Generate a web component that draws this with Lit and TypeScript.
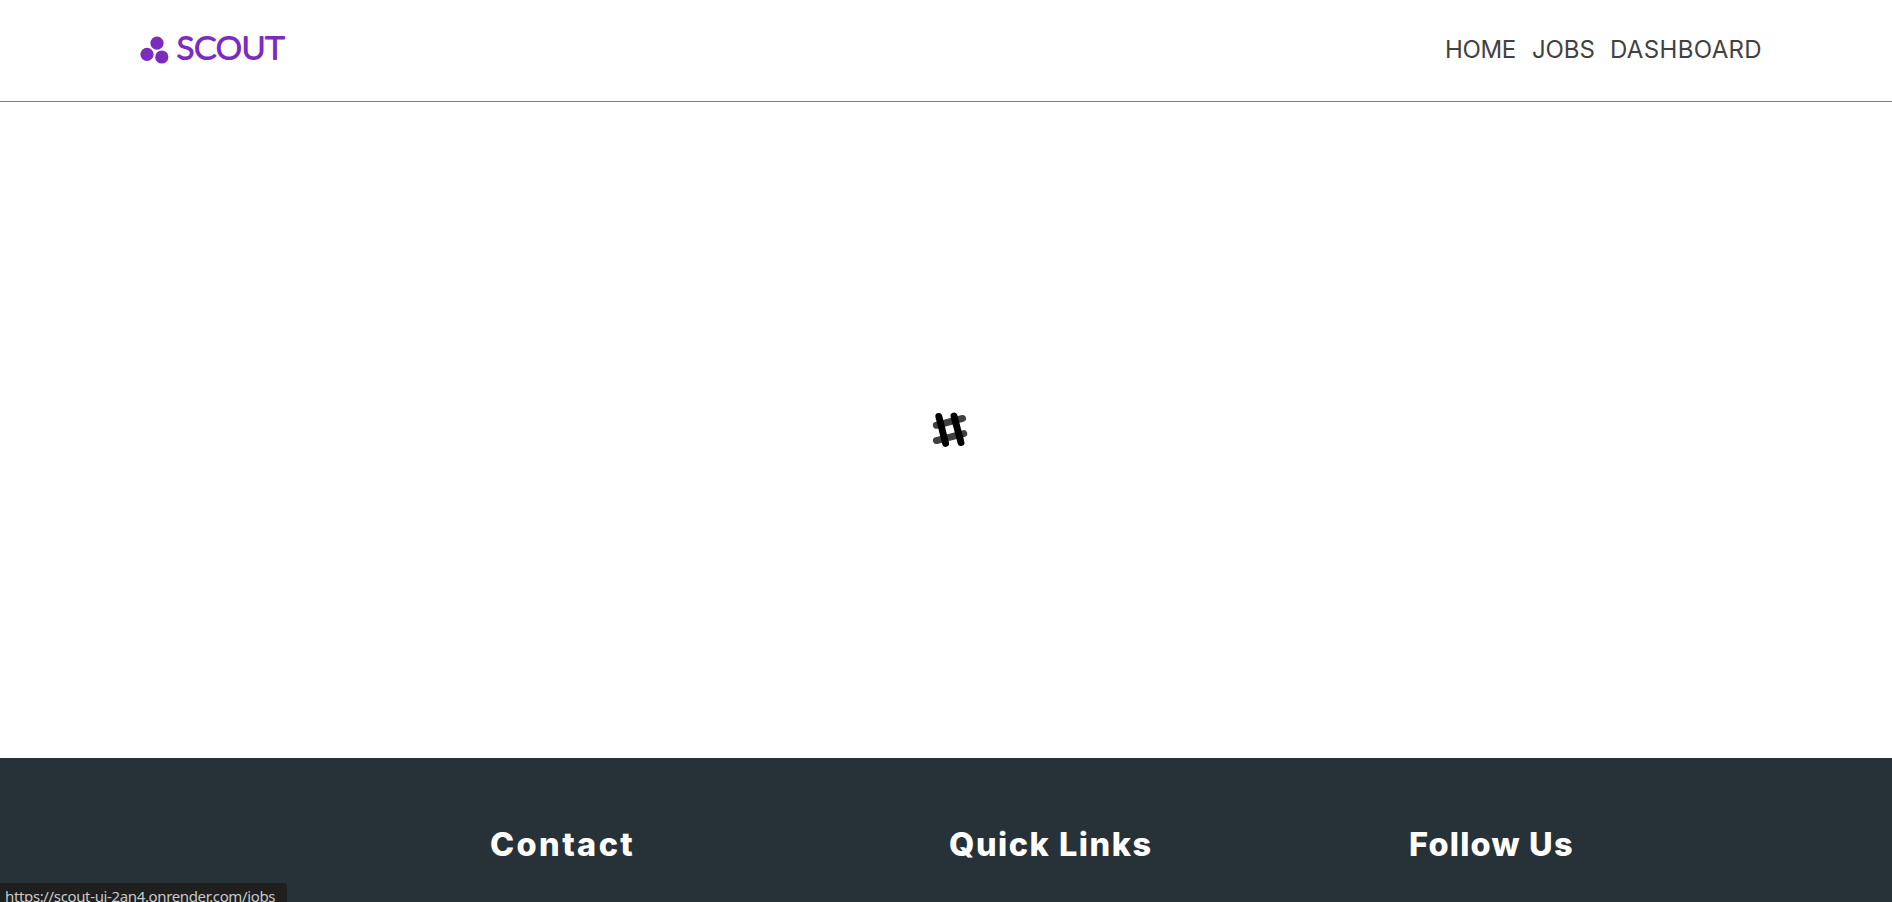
import { LitElement, html, css } from "lit";
import { customElement } from "lit/decorators.js";

@customElement("app-root")
export class AppRoot extends LitElement {
  static styles = css`
    :host { display: flex; flex-direction: column; height: 902px; overflow: hidden; position: relative;
      background: #fff; font-family: Inter, "Open Sans", sans-serif; }
    header { box-sizing: border-box; height: 102px; border-bottom: 1px solid #808080; display: flex;
      justify-content: space-between; align-items: flex-start; padding: 25px 130px 0 130px; }
    .logo { display: block; }
    .logo text { font-family: Lato, sans-serif; font-size: 32px; font-weight: 300; }
    nav { display: flex; padding-top: 10px; color: #424242; font-size: 24px; line-height: 29px; font-weight: 380; }
    .home { width: 87px; letter-spacing: -0.4px; }
    .jobs { width: 78px; letter-spacing: -0.1px; }
    .dash { width: 152px; letter-spacing: 0.35px; }
    main { height: 656px; display: flex; align-items: center; justify-content: center; padding-left: 8px; }
    footer { flex: 1; background: #263238; display: grid; grid-template-columns: repeat(4, 459px);
      padding: 67px 0 0 31px; }
    h3 { margin: 0; color: #fff; font-size: 32.5px; line-height: 40px; font-weight: 800; white-space: nowrap; }
    .contact { letter-spacing: 2.4px; }
    .links { letter-spacing: 1.5px; }
    .follow { letter-spacing: 1.2px; padding-left: 1px; }
    .status { position: absolute; left: 0; bottom: 0; width: 287px; height: 19px; background: #1f1f1f;
      border-top-right-radius: 4px; color: #c9c9c9; font: 15px/20px "Noto Sans", sans-serif; letter-spacing: -0.36px;
      white-space: nowrap; box-sizing: border-box; padding: 3px 0 0 5px; }
  `;

  render() {
    return html`
      <header>
        <svg class="logo" width="170" height="50" viewBox="0 0 170 50">
          <g fill="#7b2cbf">
            <circle cx="27" cy="18.2" r="6.6" />
            <circle cx="17" cy="29.4" r="6.6" />
            <circle cx="31.8" cy="32" r="6.6" />
            <text x="46.8" y="34.3" textLength="107.6" lengthAdjust="spacingAndGlyphs"
              stroke="#7b2cbf" stroke-width="2.1" stroke-linejoin="round">SCOUT</text>
          </g>
        </svg>
        <nav>
          <span class="home">HOME</span><span class="jobs">JOBS</span><span class="dash">DASHBOARD</span>
        </nav>
      </header>
      <main>
        <svg width="32" height="32" viewBox="934 414 32 32" overflow="visible" stroke-linecap="round" stroke-width="6.9">
          <path d="M936.3 425.3L962.6 418.4M936.4 440.6L963.8 433.6" stroke="#404040" />
          <path d="M938.8 416.4L945.6 443.4M954 416L961 442.6" stroke="#000" />
        </svg>
      </main>
      <footer>
        <div></div>
        <h3 class="contact">Contact</h3>
        <h3 class="links">Quick Links</h3>
        <h3 class="follow">Follow Us</h3>
      </footer>
      <div class="status">https://scout-ui-2an4.onrender.com/jobs</div>
    `;
  }
}
